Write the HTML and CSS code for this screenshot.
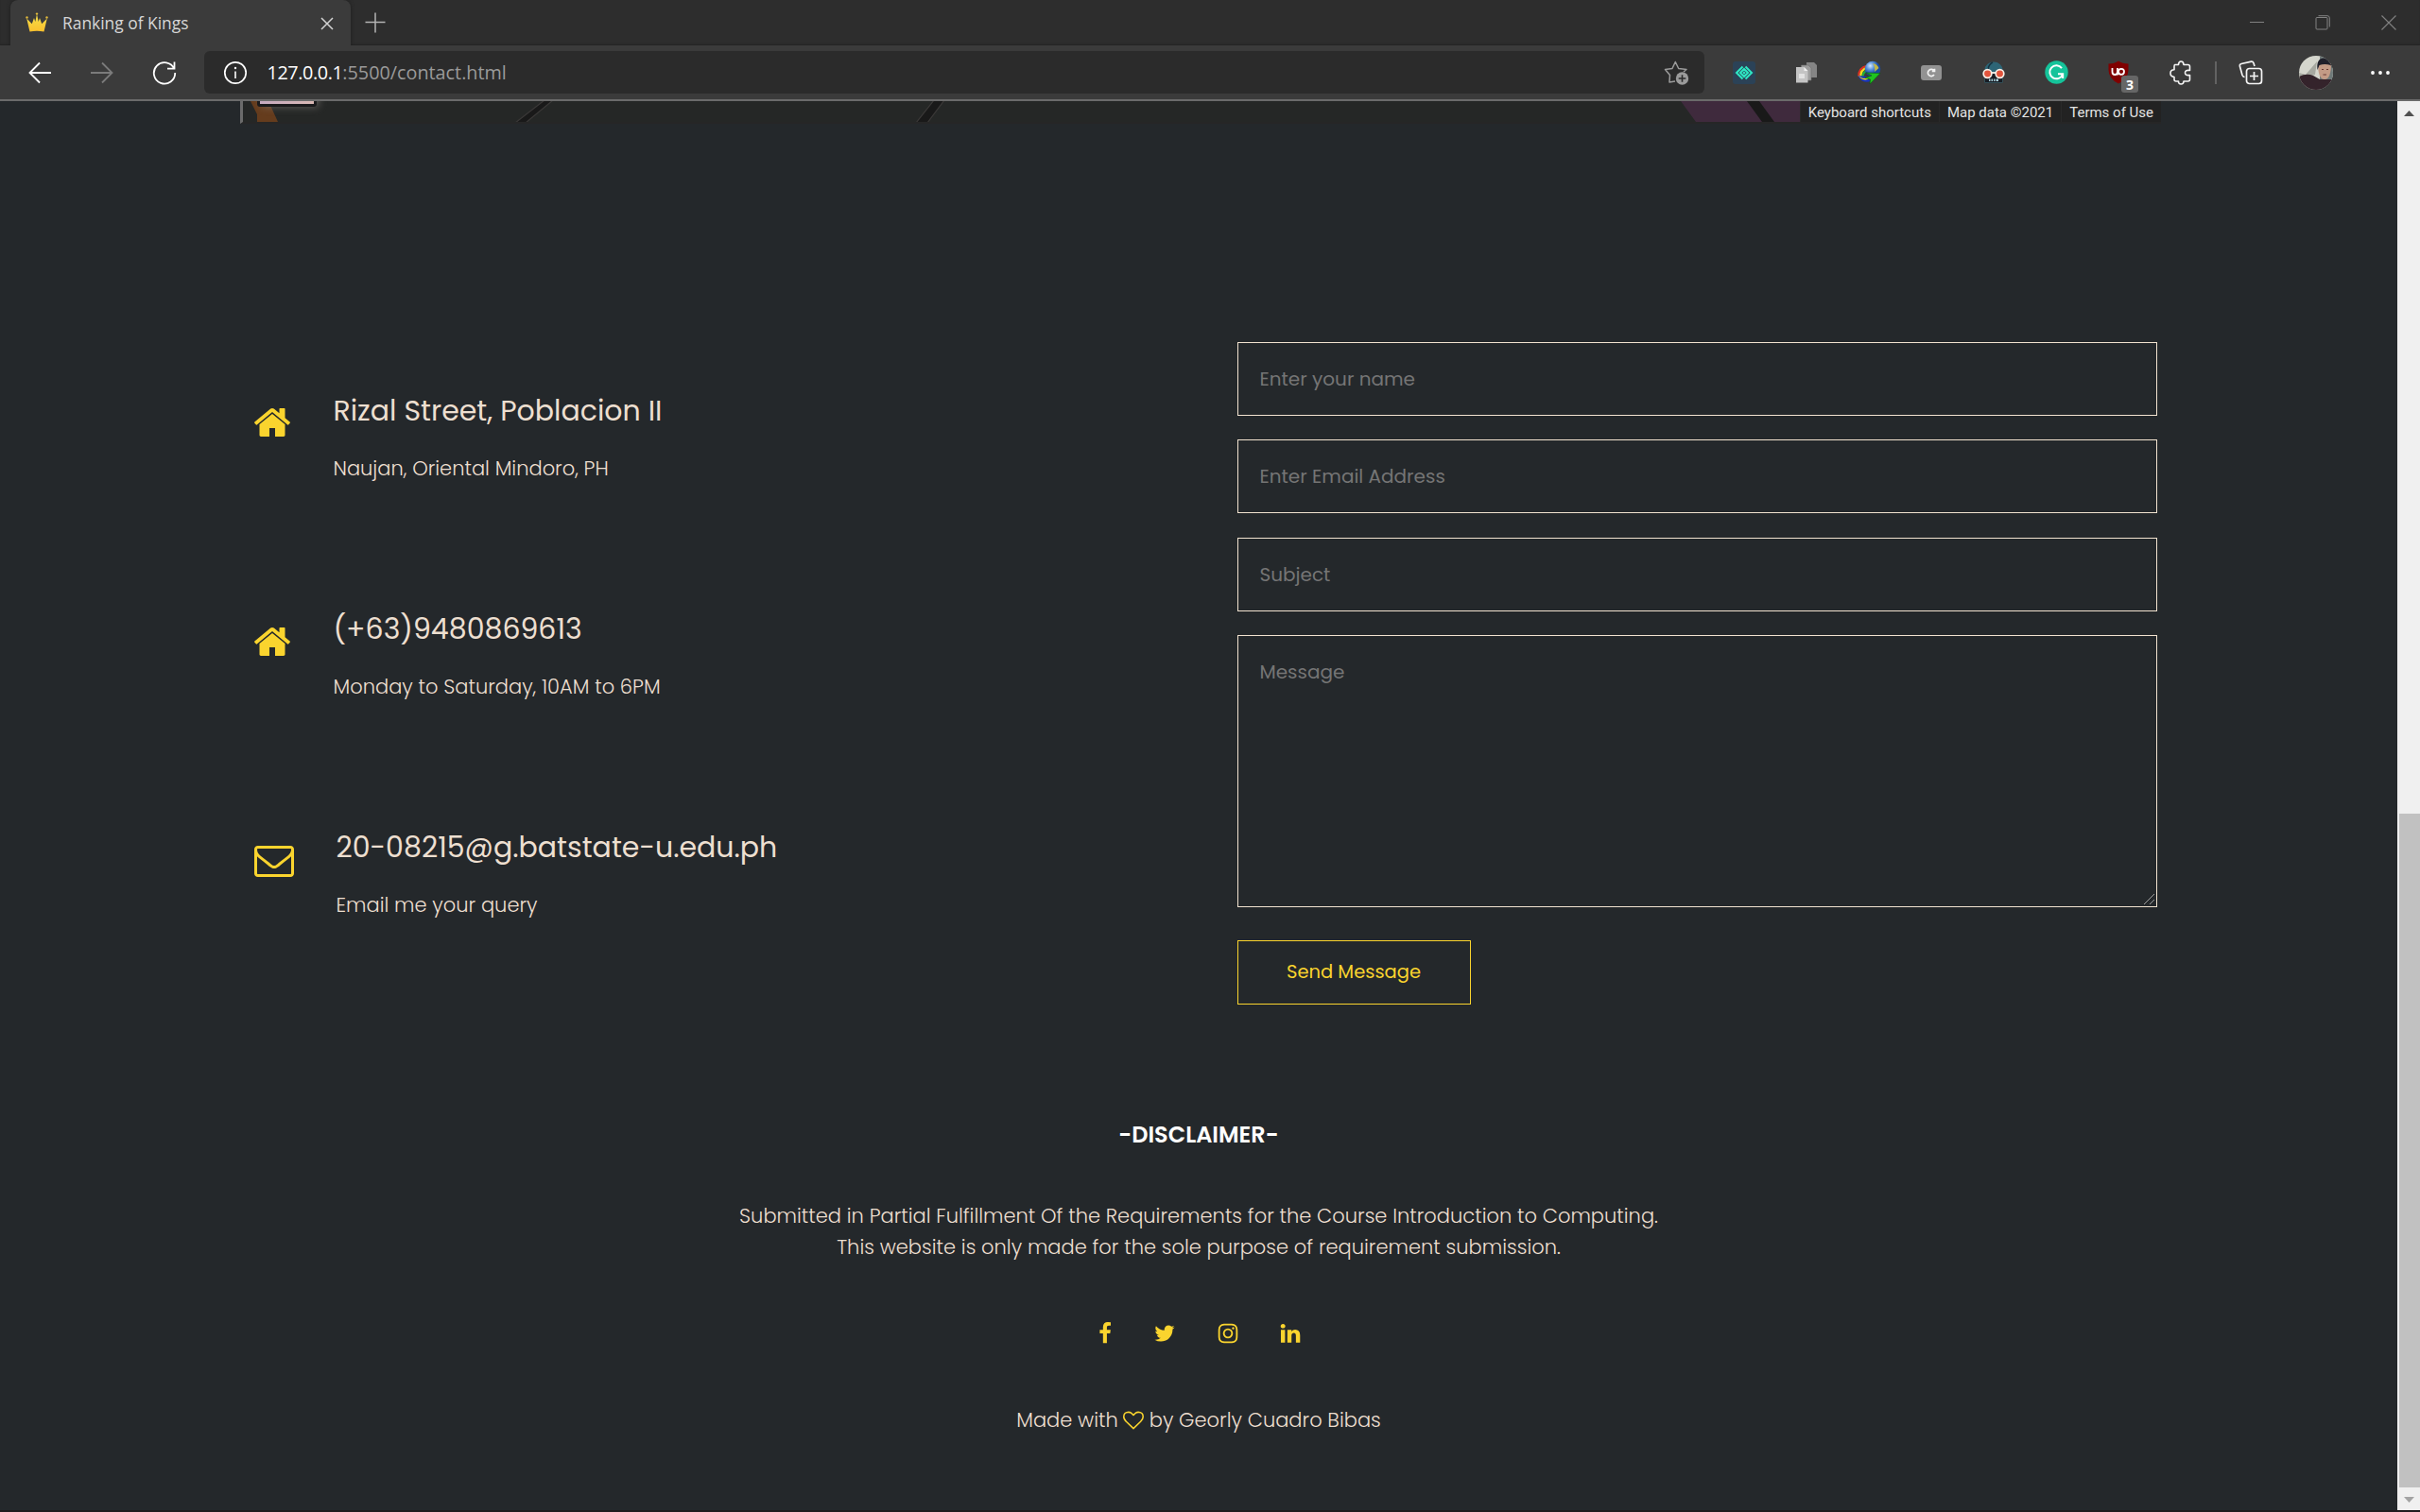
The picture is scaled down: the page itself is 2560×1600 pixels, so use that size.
FILE: index.html
```
<!DOCTYPE html>
<html lang="en">
<head>
<meta charset="utf-8">
<title>Ranking of Kings</title>
<link rel="stylesheet" href="styles.css">
</head>
<body>
<div class="window">
  <header class="tabstrip">
    <div class="tab">
      <svg class="crown" width="24" height="22" viewBox="0 0 24 22"><defs><linearGradient id="gold" x1="0" y1="0" x2="0" y2="1"><stop offset="0" stop-color="#f3e04a"/><stop offset="1" stop-color="#fbc02d"/></linearGradient></defs><path d="M4.500 20.500 1.200 6.500 6.800 12.300 9 6 10.300 10 12 2 13.700 10 15 6 17.200 12.300 22.800 6.500 19.500 20.500Q12 19 4.500 20.500Z" fill="url(#gold)"/><g fill="#e0b93c"><circle cx="1.500" cy="5.500" r="1.200"/><circle cx="12" cy="1.600" r="1.200"/><circle cx="22.500" cy="5.500" r="1.200"/></g></svg>
      <span class="tab-title">Ranking of Kings</span>
      <svg class="tab-close" width="14" height="14" viewBox="0 0 14 14"><path d="M1 1 13 13M13 1 1 13" stroke="#d4d4d4" stroke-width="1.500"/></svg>
    </div>
    <svg class="new-tab" width="22" height="22" viewBox="0 0 22 22"><path d="M11 0.500V21.500M.5 10.500H21.500" stroke="#b4b4b4" stroke-width="1.500"/></svg>
    <div class="window-buttons">
      <svg width="16" height="16" viewBox="0 0 16 16"><path d="M0 7.500H15" stroke="#828282"/></svg>
      <svg width="17" height="17" viewBox="0 0 17 17"><path d="M1 3.500Q1 2.500 2 2.500H12Q13 2.500 13 3.500V14Q13 15 12 15H2Q1 15 1 14ZM3.500 .7H13Q15.300 .7 15.300 3V12.500" fill="none" stroke="#828282"/></svg>
      <svg width="16" height="16" viewBox="0 0 16 16"><path d="M.5 .5 15.500 15.500M15.500 .5 .5 15.500" stroke="#828282" stroke-width="1.100"/></svg>
    </div>
  </header>

  <nav class="toolbar">
    <div class="nav-buttons">
      <svg width="24" height="24" viewBox="0 0 24 24"><path d="M24 12H1.500M12 1.500 1.500 12 12 22.500" fill="none" stroke="#fff" stroke-width="1.800"/></svg>
      <svg width="24" height="24" viewBox="0 0 24 24"><path d="M0 12H22.500M12 1.500 22.500 12 12 22.500" fill="none" stroke="#7b7b7b" stroke-width="1.800"/></svg>
      <svg width="26" height="26" viewBox="0 0 26 26"><path d="M23.300 9A11.200 11.200 0 1 0 24.200 13M23.500 1.500V8.700H16" fill="none" stroke="#fff" stroke-width="1.800"/></svg>
    </div>
    <div class="address">
      <svg width="26" height="26" viewBox="0 0 26 26"><circle cx="13" cy="13" r="11.200" fill="none" stroke="#fff" stroke-width="1.700"/><path d="M13 11.500V19" stroke="#fff" stroke-width="1.600"/><circle cx="13" cy="8" r="1.200" fill="#fff"/></svg>
      <span class="url"><span class="host">127.0.0.1</span>:5500/contact.html</span>
      <svg class="favorite" width="28" height="26" viewBox="0 0 28 26"><path d="M12 22 6 23 6.500 15.500 1.500 9.500 9 8.500 12.300 1.500 15.700 8.500 24 9.500 21 12" fill="none" stroke="#9b9b9b" stroke-width="1.500" stroke-linejoin="round"/><circle cx="19.500" cy="19" r="6.700" fill="#9b9b9b"/><path d="M19.500 15.200V22.800M15.700 19H23.300" stroke="#2b2b2b" stroke-width="1.600"/></svg>
    </div>
    <ul class="extensions">
      <li><svg width="24" height="24" viewBox="0 0 24 24"><rect width="24" height="24" rx="3" fill="#2b4257"/><g fill="none" stroke="#2ee8c4" stroke-width="2"><path d="M10.500 5.500 4 12 10.500 18.500M13.500 5.500 20 12 13.500 18.500M8 12 12 8 16 12 12 16Z"/></g><rect x="10.800" y="10.800" width="2.400" height="2.400" transform="rotate(45 12 12)" fill="#2ee8c4"/></svg></li>
      <li><svg width="24" height="24" viewBox="0 0 24 24"><path d="M12 1H20L23 4V17H12Z" fill="#858585"/><path d="M6.500 4H14L17 7V20H6.500Z" fill="#9d9d9d" stroke="#707070" stroke-width=".6"/><path d="M1 6H9.500L13.500 10V22.500H1Z" fill="#c4c4c4"/><path d="M9.500 6V10H13.500Z" fill="#f0f0f0"/><path d="M4 13H10V18H4Z" fill="#e2e2e2"/></svg></li>
      <li><svg width="26" height="26" viewBox="0 0 26 26"><defs><radialGradient id="globe" cx=".35" cy=".3"><stop offset="0" stop-color="#d5e8ff"/><stop offset=".5" stop-color="#5b93dc"/><stop offset="1" stop-color="#1b4aa0"/></radialGradient></defs><g fill="none" stroke-width="2.200"><path d="M2.500 17Q1.500 8 11.500 5.500" stroke="#e03020"/><path d="M4.500 18Q3.500 9.500 12 7.500" stroke="#f7e01c"/><path d="M6.500 18.500Q6 12 12.500 10" stroke="#1fae3c"/></g><path d="M1.500 16Q5 25 15 22L11 17Z" fill="#1835c0"/><path d="M1.500 15Q6 21 12 18L12 20Q5 22 1.500 15Z" fill="#f7e01c"/><circle cx="17" cy="9" r="8.300" fill="url(#globe)"/><path d="M17 3Q22 4 23.500 8L19 12Q20 7 17 3Z" fill="#c2b648"/><path d="M10 13 25 13.500 14 25 14.500 20 9 18.500 16 16Z" fill="#1fc41f" stroke="#0b5b10" stroke-width=".6"/></svg></li>
      <li><svg width="24" height="18" viewBox="0 0 24 18"><rect x="1" y="1" width="22" height="16" rx="3" fill="#929292"/><path d="M15 7A3.600 3.600 0 1 0 15 11M15.500 4.700V7.500H12.800" fill="none" stroke="#f2f2f2" stroke-width="1.700"/></svg></li>
      <li><svg width="24" height="24" viewBox="0 0 24 24"><path d="M2.500 22.500V9A9.500 8.500 0 0 1 21.500 9V22.500Z" fill="#2d6576"/><path d="M3 13H21V22H3Z" fill="#171d24"/><path d="M6 8Q7 3 11 1" stroke="#173240" stroke-width="1.500" fill="none"/><path d="M7 18.500H17V21H7Z" fill="#a9ccd6"/><path d="M9 18V22M11.500 18V22M14 18V22" stroke="#171d24"/><g fill="#e2543c" stroke="#f7eee6" stroke-width="1.700"><circle cx="5.500" cy="13" r="4.300"/><circle cx="18.500" cy="13" r="4.300"/></g><path d="M9.500 12H14.500" stroke="#f7eee6" stroke-width="1.800"/></svg></li>
      <li><svg width="25" height="25" viewBox="0 0 25 25"><circle cx="12.500" cy="12.500" r="12.200" fill="#15c39a"/><path d="M18 8.200A7 7 0 1 0 19 14.500M14 14.200H19.200V19" fill="none" stroke="#fff" stroke-width="2"/></svg></li>
      <li class="blocker"><svg width="24" height="25" viewBox="0 0 24 25"><path d="M12 .5Q16 3.500 22.500 3.500V10Q22.500 19 12 24.500 1.500 19 1.500 10V3.500Q8 3.500 12 .5Z" fill="#800000"/><path d="M5.500 8V12Q5.500 15 8.200 15T11 12V8M11 12.500V15.500" fill="none" stroke="#fff" stroke-width="1.800"/><circle cx="15" cy="11.800" r="3" fill="none" stroke="#fff" stroke-width="1.800"/></svg><span class="count">3</span></li>
      <li><svg width="24" height="26" viewBox="0 0 24 26"><path d="M5.500 4.500H9.500Q9.500 1 12.200 1T15 4.500H19.500Q21.500 4.500 21.500 6.500V10.500Q16.500 9.700 16.500 13T21.500 15.500V20Q21.500 22 19.500 22H15Q15 25 12.200 25T9.500 22H7Q5 22 5 20V17.500Q1 17 1 13.500T5 9.800V6.500Q5 4.500 5.500 4.500Z" fill="none" stroke="#f5f5f5" stroke-width="1.600" stroke-linejoin="round"/></svg></li>
    </ul>
    <span class="divider"></span>
    <svg class="collections" width="26" height="26" viewBox="0 0 26 26"><g fill="none" stroke="#f5f5f5" stroke-width="1.700"><rect x="8.500" y="8.500" width="16" height="16" rx="3"/><path d="M16.500 12V21M12 16.500H21M17 6 16 2.800Q15.300 1 13.500 1.200L3 3.500Q1 4 1.400 6L4 15.500Q4.800 17.500 6.500 17.300"/></g></svg>
    <svg class="avatar" width="36" height="36" viewBox="0 0 36 36"><defs><clipPath id="round"><circle cx="18" cy="18" r="18"/></clipPath></defs><g clip-path="url(#round)"><rect width="36" height="36" fill="#d5d6cd"/><path d="M22 0H36V36H22Z" fill="#6f7a79"/><path d="M0 18 7 20 19 6 17 20 0 25Z" fill="#a6a8a0"/><path d="M0 22Q8 18 15 21L22 25 36 25V36H0Z" fill="#34232b"/><path d="M20 8Q20 25 27 25T34 8Z" fill="#c39b86"/><path d="M19.500 15Q18 3 26 2.500T35 13L33.500 10Q27 8 21.500 10Z" fill="#20202a"/><path d="M24 14.500H26M29 14.500H31M25.500 20H29" stroke="#6a3b34"/></g></svg>
    <svg class="more" width="22" height="6" viewBox="0 0 22 6"><g fill="#fff"><circle cx="3" cy="3" r="1.900"/><circle cx="11" cy="3" r="1.900"/><circle cx="19" cy="3" r="1.900"/></g></svg>
  </nav>

  <div class="viewport">
    <main class="page">
      <div class="map">
        <svg class="map-tiles" width="2029" height="22" viewBox="0 0 2029 22"><defs><filter id="glow" x="-.3" y="-2" width="1.600" height="5"><feGaussianBlur stdDeviation="4"/></filter><linearGradient id="thumb" x1="0" x2="1"><stop offset="0" stop-color="#c5aac0"/><stop offset="1" stop-color="#d9b8b4"/></linearGradient></defs><path d="M8 0H27L37 22H15V14Z" fill="#653c1d"/><path d="M20 -10H80V6H20Z" fill="#8a8580" filter="url(#glow)" opacity=".6"/><path d="M15 -6H78V3Q78 6 75 6H18Q15 6 15 3Z" fill="#1a1a1c"/><path d="M18 0H75V3H18Z" fill="url(#thumb)"/><g fill="#191919" stroke="#3b3938" stroke-width="1.200"><path d="M288 23 319 -1H328L299 23ZM712 23 731 -1H742L724 23Z"/></g><path d="M1521 0H1648V22H1537Z" fill="#3f2a3d"/><path d="M1591 0H1604L1620 22H1607Z" fill="#191919"/></svg>
        <div class="map-credits"><span>Keyboard shortcuts</span><span>Map data ©2021</span><span>Terms of Use</span></div>
      </div>

      <section class="contact">
        <div class="details">
          <div class="detail">
            <svg width="42" height="42" viewBox="0 0 1792 1792"><path id="home" d="M1472 992v480q0 26-19 45t-45 19h-384v-384h-256v384h-384q-26 0-45-19t-19-45v-480q0-1 .5-3t.5-3l575-474 575 474q1 2 1 6zm223-69l-62 74q-8 9-21 11h-3q-13 0-21-7l-692-577-692 577q-12 8-24 7-13-2-21-11l-62-74q-8-10-7-23.500t11-21.500l719-599q32-26 76-26t76 26l244 204v-195q0-14 9-23t23-9h192q14 0 23 9t9 23v408l219 182q10 8 11 21.500t-7 23.500z"/></svg>
            <div><h5>Rizal Street, Poblacion II</h5><p>Naujan, Oriental Mindoro, PH</p></div>
          </div>
          <div class="detail phone">
            <svg width="42" height="42" viewBox="0 0 1792 1792"><use href="#home"/></svg>
            <div><h5>(+63)9480869613</h5><p>Monday to Saturday, 10AM to 6PM</p></div>
          </div>
          <div class="detail email">
            <svg width="42" height="42" viewBox="0 0 1792 1792"><path d="M1664 1504v-768q-32 36-69 66-268 206-426 338-51 43-83 67t-86.500 48.500-102.500 24.500h-2q-48 0-102.500-24.500t-86.500-48.500-83-67q-158-132-426-338-37-30-69-66v768q0 13 9.500 22.500t22.500 9.500h1472q13 0 22.500-9.500t9.500-22.500zm0-1051v-24.500l-.5-13-3-12.500-5.500-9-9-7.500-14-2.500h-1472q-13 0-22.500 9.500t-9.500 22.500q0 168 147 284 193 152 401 317 6 5 35 29.500t46 37.500 44.500 31.500 50.500 27.500 43 9h2q20 0 43-9t50.500-27.500 44.500-31.500 46-37.500 35-29.500q208-165 401-317 54-43 100.500-115.500t46.500-131.500zm128-37v1088q0 66-47 113t-113 47h-1472q-66 0-113-47t-47-113v-1088q0-66 47-113t113-47h1472q66 0 113 47t47 113z"/></svg>
            <div><h5>20-08215@g.batstate-u.edu.ph</h5><p>Email me your query</p></div>
          </div>
        </div>
        <form class="form">
          <input type="text" placeholder="Enter your name">
          <input type="email" placeholder="Enter Email Address">
          <input class="subject" type="text" placeholder="Subject">
          <div class="message">
            <textarea placeholder="Message"></textarea>
            <svg class="grip" width="13" height="13" viewBox="0 0 13 13"><path d="M1 12 12 1M7 12 12 7" stroke="#a0a0a0" stroke-width="1"/></svg>
          </div>
          <button type="button">Send Message</button>
        </form>
      </section>

      <footer class="footer">
        <h4>-DISCLAIMER-</h4>
        <p>Submitted in Partial Fulfillment Of the Requirements for the Course Introduction to Computing.<br>This website is only made for the sole purpose of requirement submission.</p>
        <div class="social">
          <svg width="24" height="24" viewBox="0 0 1792 1792"><path d="M1343 12v264h-157q-86 0-116 36t-30 108v189h293l-39 296h-254v759h-306v-759h-255v-296h255v-218q0-186 104-288.500t277-102.500q147 0 228 12z"/></svg>
          <svg class="twitter" width="24" height="24" viewBox="0 0 1792 1792"><path d="M1684 408q-67 98-162 167 1 14 1 42 0 130-38 259.500t-115.500 248.500-184.500 210.500-258 146-323 54.500q-271 0-496-145 35 4 78 4 225 0 401-138-105-2-188-64.500t-114-159.500q33 5 61 5 43 0 85-11-112-23-185.500-111.500t-73.500-205.500v-4q68 38 146 41-66-44-105-115t-39-154q0-88 44-163 121 149 294.500 238.500t371.500 99.500q-8-38-8-74 0-134 94.500-228.500t228.500-94.500q140 0 236 102 109-21 205-78-37 115-142 178 93-10 186-50z"/></svg>
          <svg class="instagram" width="24" height="24" viewBox="0 0 1792 1792"><path d="M1152 896q0-106-75-181t-181-75-181 75-75 181 75 181 181 75 181-75 75-181zm138 0q0 164-115 279t-279 115-279-115-115-279 115-279 279-115 279 115 115 279zm108-410q0 38-27 65t-65 27-65-27-27-65 27-65 65-27 65 27 27 65zm-502-220q-7 0-76.500-.5t-105.500 0-96.500 3-103 10-71.500 18.500q-50 20-88 58t-58 88q-11 29-18.500 71.500t-10 103-3 96.500 0 105.500.5 76.500-.5 76.500 0 105.500 3 96.500 10 103 18.500 71.500q20 50 58 88t88 58q29 11 71.500 18.500t103 10 96.500 3 105.500 0 76.500-.5 76.500.5 105.500 0 96.500-3 103-10 71.500-18.500q50-20 88-58t58-88q11-29 18.500-71.500t10-103 3-96.500 0-105.500-.5-76.500.5-76.500 0-105.500-3-96.500-10-103-18.500-71.500q-20-50-58-88t-88-58q-29-11-71.500-18.500t-103-10-96.500-3-105.500 0-76.500.5zm768 630q0 229-5 317-10 208-124 322t-322 124q-88 5-317 5t-317-5q-208-10-322-124t-124-322q-5-88-5-317t5-317q10-208 124-322t322-124q88-5 317-5t317 5q208 10 322 124t124 322q5 88 5 317z"/></svg>
          <svg class="linkedin" width="24" height="24" viewBox="0 0 1792 1792"><path d="M477 625v991h-330v-991h330zm21-306q1 73-50.500 122t-135.500 49h-2q-82 0-132-49t-50-122q0-74 51.500-122.500t134.500-48.500 133 48.500 51 122.500zm1166 729v568h-329v-530q0-105-40.500-164.500t-126.500-59.500q-63 0-105.500 34.500t-63.500 85.500q-11 30-11 81v553h-329q2-399 2-647t-1-296l-1-48h329v144h-2q20-32 41-56t56.500-52 87-43.500 114.500-15.500q171 0 275 113.500t104 332.500z"/></svg>
        </div>
        <p class="credit">Made with <svg width="22" height="22" viewBox="0 0 1792 1792"><path d="M1664 596q0-81-21.500-143t-55-98.500-81.500-59.500-94-31-98-8-112 25.500-110.500 64-86.500 72-60 61.500q-18 22-49 22t-49-22q-24-28-60-61.500t-86.500-72-110.500-64-112-25.500-98 8-94 31-81.500 59.500-55 98.500-21.500 143q0 168 187 355l581 560 580-559q188-188 188-356zm128 0q0 221-229 450l-623 600q-18 18-44 18t-44-18l-624-602q-10-8-27.500-26t-55.500-65.500-68-97.500-53.500-121-23.500-138q0-220 127-344t351-124q62 0 126.500 21.500t120 58 95.500 68.500 76 68q36-36 76-68t95.500-68.500 120-58 126.500-21.500q224 0 351 124t127 344z"/></svg> by Georly Cuadro Bibas</p>
      </footer>
    </main>
    <div class="scrollbar">
      <svg width="24" height="24" viewBox="0 0 24 24"><path d="M7 16H18L12.500 10Z" fill="#505050"/></svg>
      <div class="scroll-thumb"></div>
      <svg width="24" height="24" viewBox="0 0 24 24"><path d="M7 10H18L12.500 16Z" fill="#a3a3a3"/></svg>
    </div>
  </div>
</div>
</body>
</html>
```
FILE: styles.css
```
* { box-sizing: border-box; margin: 0; padding: 0; }

body {
  width: 2560px;
  height: 1600px;
  overflow: hidden;
  background: #1f1b1e;
  font-family: Poppins, Inter, sans-serif;
}

svg { display: block; flex: none; }

.window { display: flex; flex-direction: column; height: 1598px; }

/* Browser tab strip */
.tabstrip {
  display: flex;
  align-items: center;
  height: 48px;
  padding: 0 25px 0 11px;
  background: #2d2d2d;
  box-shadow: inset 0 -2px 2px -1px #232323;
  font-family: "Open Sans", "Noto Sans", sans-serif;
}
.tab {
  display: flex;
  align-items: center;
  width: 360px;
  height: 48px;
  padding: 0 18px 0 16px;
  border-radius: 8px 8px 0 0;
  background: #3b3b3b;
  box-shadow: 0 0 4px #1d1d1d;
}
.tab-title {
  padding-left: 15px;
  font-size: 17.4px;
  line-height: 24px;
  color: #d6d6d6;
}
.tab-close { margin: 1px 0 0 auto; }
.new-tab { margin-left: 15px; }
.window-buttons { display: flex; align-items: center; gap: 53px; margin-left: auto; }

/* Browser toolbar */
.toolbar {
  display: flex;
  align-items: center;
  height: 59px;
  padding: 0 31px 0 30px;
  background: #3b3b3b;
  border-bottom: 2px solid #6b6b6b;
  font-family: "Open Sans", "Noto Sans", sans-serif;
}
.nav-buttons { display: flex; align-items: center; gap: 41.500px; width: 186px; }
.address {
  display: flex;
  align-items: center;
  width: 1587px;
  height: 45px;
  padding: 0 15px 0 20px;
  border-radius: 6px;
  background: #2b2b2b;
}
.url { padding-left: 20.500px; font-size: 19.8px; line-height: 28px; color: #9a9a9a; }
.host { color: #fff; letter-spacing: -.4px; }
.favorite { margin-left: auto; }
.extensions { display: flex; margin-left: 9px; list-style: none; }
.extensions li {
  display: flex;
  align-items: center;
  justify-content: center;
  width: 66px;
  height: 48px;
}
.blocker { position: relative; }
.count {
  position: absolute;
  left: 36px;
  top: 27px;
  width: 18px;
  height: 18px;
  border-radius: 3px;
  background: #666;
  color: #fff;
  font-size: 14px;
  font-weight: 700;
  line-height: 20px;
  text-align: center;
}
.divider { width: 2px; height: 24px; margin-left: 3px; background: #626262; }
.collections { margin-left: 23px; }
.avatar { margin-left: 38px; }
.more { margin-left: auto; }

/* Page */
.viewport { display: flex; flex: 1; min-height: 0; }
.page { width: 2536px; background: #24282b; color: #eddfd0; }

.map {
  display: grid;
  width: 2032px;
  height: 24px;
  margin-left: 254px;
  border-left: 3px solid #6b6b6b;
  border-bottom: 2px solid #262626;
  background: #252726;
}
.map > * { grid-area: 1 / 1; }
.map-credits {
  display: flex;
  justify-content: flex-end;
  height: 22px;
  font-family: Roboto, sans-serif;
  font-size: 15px;
  line-height: 24px;
  color: #e4e4e4;
}
.map-credits span {
  padding: 0 8px;
  border-left: 1px solid #292929;
  background: #222;
}

.contact { display: flex; height: 932px; padding: 231px 254px 0 267px; }
.details { width: 1042px; padding-top: 50px; }
.detail { display: flex; gap: 43.500px; height: 231px; fill: #fad42e; }
.detail > svg { margin-top: 14px; }
.detail.phone > svg, .detail.email > svg { margin-top: 15px; }
.detail.email { gap: 45px; padding-left: 1.500px; }
.detail h5 { font-size: 30px; font-weight: 400; line-height: 45px; }
.detail p { padding-top: 23px; font-size: 21px; font-weight: 300; line-height: 32px; }

.form { display: flex; flex-direction: column; width: 973px; }
.form input, .form textarea {
  display: block;
  width: 100%;
  height: 78px;
  border: 1px solid #f2e3d0;
  border-radius: 0;
  outline: 0;
  background: transparent;
  padding: 0 22.500px;
  color: #eddfd0;
  font: 400 20px/30px Poppins, Inter, sans-serif;
}
.form input { margin-bottom: 25px; }
.form input:nth-child(2) { margin-bottom: 26px; }
.form ::placeholder { color: #757575; opacity: 1; }
.message { position: relative; }
.form textarea { height: 288px; padding: 23px 22.500px; resize: none; }
.grip { position: absolute; right: 2px; bottom: 2px; }
.form button {
  width: 247px;
  height: 68px;
  margin-top: 35px;
  padding-right: 1px;
  border: 1px solid #fad42e;
  background: transparent;
  color: #fad42e;
  font: 400 19.5px/30px Poppins, Inter, sans-serif;
}

.footer { padding-top: 120px; text-align: center; }
.footer h4 { font-size: 24px; font-weight: 600; line-height: 36px; color: #fff; }
.footer p { margin-top: 51px; font-size: 21px; font-weight: 300; line-height: 33px; }
.social { display: flex; justify-content: center; margin-top: 63px; padding-right: 3px; fill: #fad42e; }
.twitter { margin-left: 39px; }
.instagram { margin-left: 43px; }
.linkedin { margin-left: 42px; }
.footer .credit {
  display: flex;
  justify-content: center;
  align-items: center;
  gap: 5.500px;
  margin-top: 63px;
  fill: #fad42e;
}

/* Scrollbar */
.scrollbar {
  display: flex;
  flex-direction: column;
  width: 24px;
  background: #f0f0f0;
}
.scroll-thumb { flex: 1; margin: 730px 0 0 2px; background: #c1c1c1; }
```
